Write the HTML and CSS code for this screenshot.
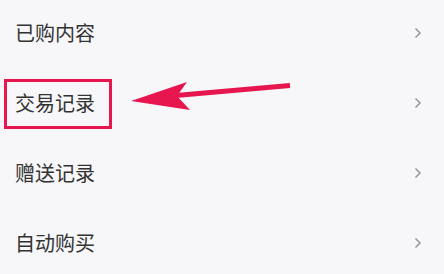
FILE: index.html
```html
<!DOCTYPE html>
<html lang="zh-CN">
<head>
  <meta charset="UTF-8">
  <meta name="viewport" content="width=device-width, initial-scale=1">
  <title>我的</title>
  <link rel="stylesheet" href="styles.css">
</head>
<body>

  <ul class="menu">
    <li class="menu-item">
      <span class="label">已购内容</span>
      <svg class="chevron" viewBox="0 0 8 12"><polyline points="1.5,1.5 6,6 1.5,10.5"/></svg>
    </li>
    <li class="menu-item marked">
      <span class="label">交易记录</span>
      <span class="mark-box"></span>
      <svg class="chevron" viewBox="0 0 8 12"><polyline points="1.5,1.5 6,6 1.5,10.5"/></svg>
    </li>
    <li class="menu-item">
      <span class="label">赠送记录</span>
      <svg class="chevron" viewBox="0 0 8 12"><polyline points="1.5,1.5 6,6 1.5,10.5"/></svg>
    </li>
    <li class="menu-item">
      <span class="label">自动购买</span>
      <svg class="chevron" viewBox="0 0 8 12"><polyline points="1.5,1.5 6,6 1.5,10.5"/></svg>
    </li>
  </ul>

  <!-- annotation arrow pointing at the marked row -->
  <svg class="arrow" viewBox="0 0 444 274">
    <line x1="176" y1="95.5" x2="290" y2="85.5"/>
    <polygon points="131,101 187,82 177,96 190,110"/>
  </svg>

</body>
</html>
```

FILE: styles.css
```css
body {
  margin: 0;
  background: #f7f7f9;
  font-family: "Noto Sans CJK SC", "Noto Sans", sans-serif;
  color: #333333;
  overflow: hidden;
}

.menu {
  list-style: none;
  margin: -2px 0 0 0;
  padding: 0;
}

.menu-item {
  position: relative;
  display: flex;
  align-items: center;
  justify-content: space-between;
  height: 70px;
  padding: 0 22px 0 15px;
}

.label {
  font-size: 20px;
  line-height: 1;
}

.chevron {
  width: 8px;
  height: 12px;
}

.chevron polyline {
  fill: none;
  stroke: #9a9a9a;
  stroke-width: 1.6;
}

/* red highlight box */
.mark-box {
  position: absolute;
  left: 4px;
  top: 11px;
  width: 108px;
  height: 50px;
  box-sizing: border-box;
  border: 3px solid #e8164f;
}

.arrow {
  position: absolute;
  left: 0;
  top: 0;
  width: 444px;
  height: 274px;
  pointer-events: none;
}

.arrow line {
  stroke: #e8164f;
  stroke-width: 5;
}

.arrow polygon {
  fill: #e8164f;
}
```
